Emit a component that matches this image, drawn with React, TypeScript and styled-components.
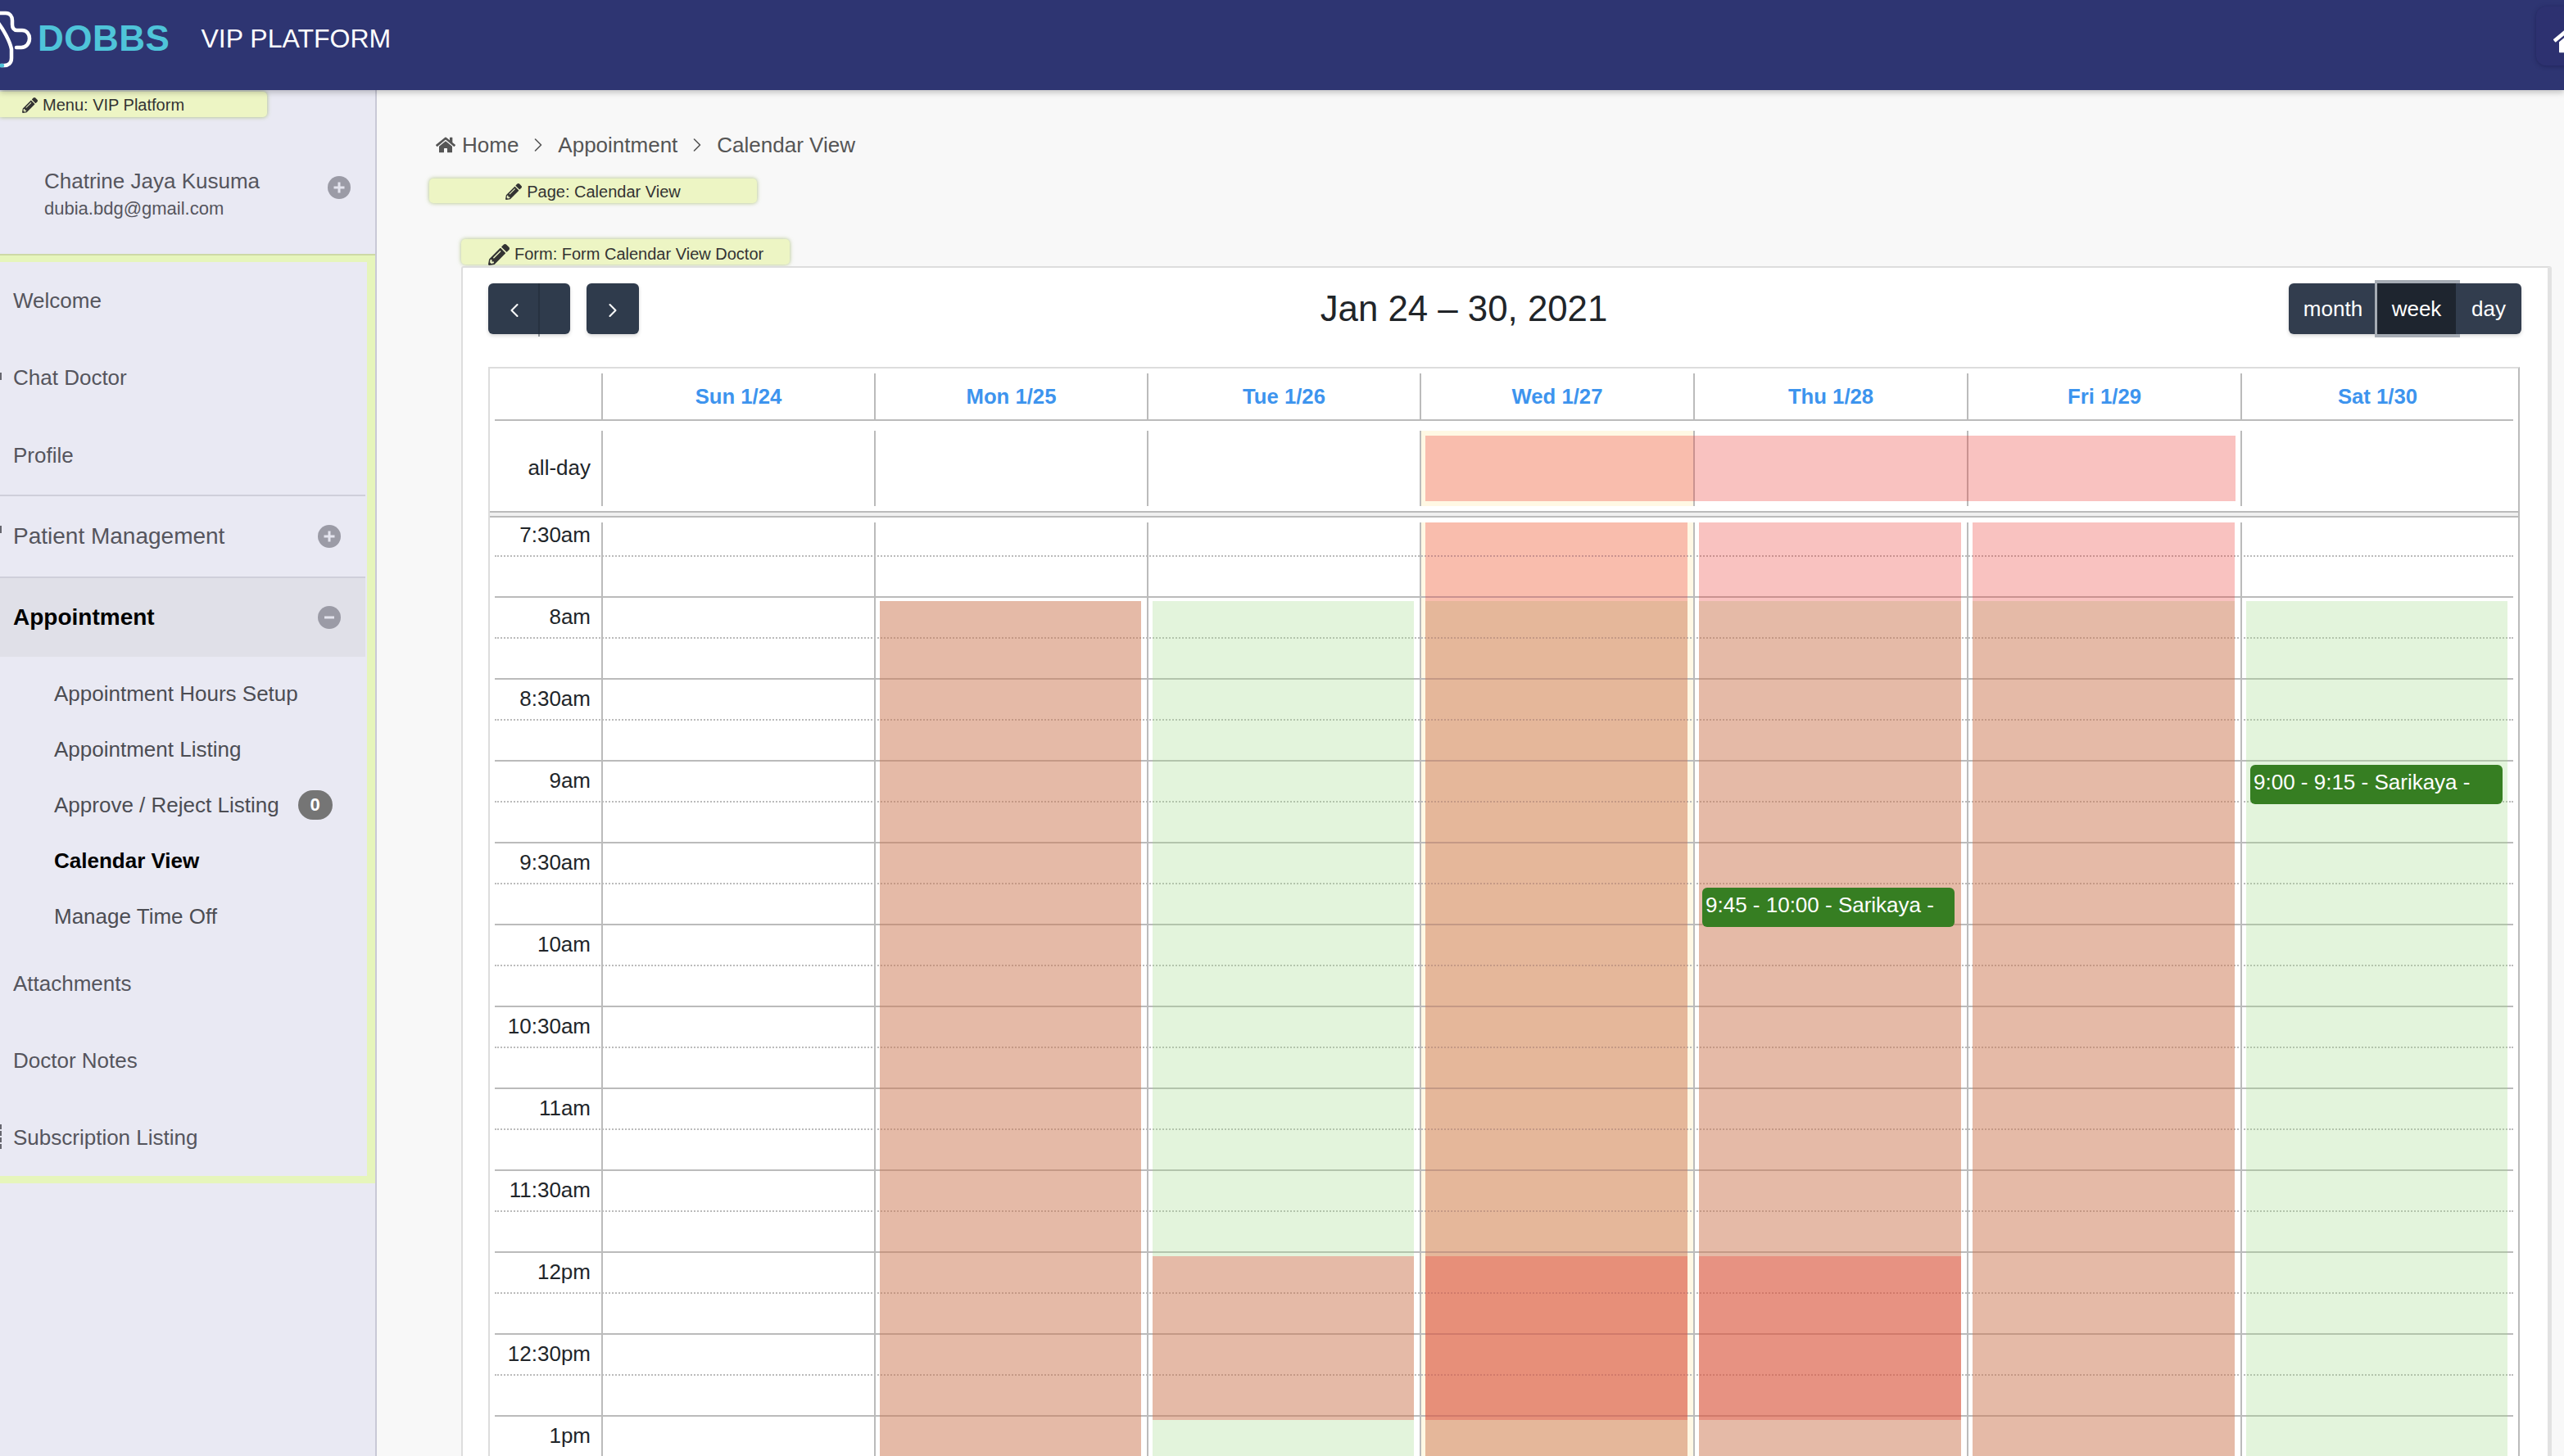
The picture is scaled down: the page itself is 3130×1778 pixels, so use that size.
import React from "react"
import styled, { createGlobalStyle } from "styled-components"
import { FaHome, FaPencilAlt } from "react-icons/fa"
import { ChevronLeft, ChevronRight } from "lucide-react"

const GlobalStyle = createGlobalStyle`
  html, body {
    margin: 0;
    padding: 0;
    height: 100%;
    overflow: hidden;
    background: #f8f8f8;
    font-family: "Liberation Sans", Arial, sans-serif;
  }
  * { box-sizing: border-box; }
`

const Page = styled.div`
  width: 3130px;
  height: 1778px;
  display: flex;
  flex-direction: column;
  overflow: hidden;
`

const Header = styled.header`
  position: relative;
  z-index: 5;
  flex: 0 0 110px;
  padding-bottom: 16px;
  display: flex;
  align-items: center;
  background: #2e3572;
  box-shadow: 0 3px 7px rgba(0, 0, 0, 0.22);
  overflow: hidden;
`

const LogoMark = styled.svg`
  flex: 0 0 40px;
  width: 40px;
  height: 94px;
`

const LogoText = styled.span`
  margin-left: 6px;
  font-size: 44px;
  font-weight: 700;
  letter-spacing: 0.5px;
  color: #4fc4d9;
`

const PlatformName = styled.span`
  margin-left: 38px;
  font-size: 32px;
  color: #fff;
`

const HomeButton = styled.div`
  margin-left: auto;
  margin-right: -36px;
  margin-bottom: 6px;
  padding-top: 8px;
  width: 70px;
  height: 72px;
  display: flex;
  align-items: center;
  padding-left: 21px;
  border-radius: 12px;
  background: #2d3170;
  box-shadow: 0 1px 5px rgba(20, 20, 70, 0.5);
  color: #fff;
`

const Body = styled.div`
  flex: 1;
  min-height: 0;
  display: flex;
`

const Sidebar = styled.aside`
  flex: 0 0 460px;
  background: #e9e9f3;
  border-right: 2px solid #c9c9d6;
`

const Tag = styled.div<{ $width: number; $inset?: number; $center?: boolean; $down?: number }>`
  width: ${p => p.$width}px;
  height: 31px;
  display: flex;
  align-items: center;
  justify-content: ${p => (p.$center ? "center" : "flex-start")};
  gap: 6px;
  padding-left: ${p => p.$inset ?? 0}px;
  padding-top: ${p => p.$down ?? 2}px;
  background: #edf5c4;
  border-radius: 5px;
  box-shadow: 0 0 5px rgba(150, 175, 90, 0.75);
  font-size: 20px;
  color: #333;
  white-space: nowrap;
`

const MenuTag = styled(Tag)`
  margin-top: 2px;
  border-radius: 0 5px 5px 0;
`

const UserBlock = styled.div`
  height: 167px;
  padding: 61px 30px 0 54px;
  display: flex;
  justify-content: space-between;
  color: #55555d;
`

const UserName = styled.div`
  font-size: 26px;
  line-height: 34px;
`

const UserMail = styled.div`
  font-size: 22px;
  line-height: 34px;
`

const MenuFrame = styled.div`
  padding: 10px 10px 9px 0;
  background: #e6f5bb;
  box-shadow: inset 0 2px 0 #cdd9a5;
`

const MenuList = styled.nav`
  background: #e9e9f3;
`

const MenuItem = styled.div<{ $height: number; $mark?: "chat" | "patient" | "list" }>`
  position: relative;
  height: ${p => p.$height}px;
  padding: 0 30px 0 16px;
  display: flex;
  align-items: center;
  justify-content: space-between;
  font-size: 26px;
  color: #55555d;
  &::before {
    content: ${p => (p.$mark ? '""' : "none")};
    position: absolute;
    left: 0;
    top: ${p => (p.$mark === "list" ? 31 : p.$mark === "patient" ? 36 : 41)}px;
    height: ${p => (p.$mark === "list" ? 30 : 9)}px;
    border-left: 2px ${p => (p.$mark === "list" ? "dashed" : "solid")} #66666e;
  }
`

const GroupItem = styled(MenuItem)<{ $open?: boolean }>`
  margin-right: 2px;
  padding-right: 30px;
  font-size: 28px;
  border-top: 2px solid #cfcfda;
  background: ${p => (p.$open ? "#e0e0e8" : "transparent")};
  color: ${p => (p.$open ? "#000" : "#55555d")};
  font-weight: ${p => (p.$open ? 700 : 400)};
`

const SubMenu = styled.div`
  padding: 11px 2px 1px 66px;
`

const SubItem = styled.div<{ $active?: boolean }>`
  height: 68px;
  display: flex;
  align-items: center;
  gap: 23px;
  font-size: 26px;
  color: ${p => (p.$active ? "#000" : "#4c4d53")};
  font-weight: ${p => (p.$active ? 700 : 400)};
`

const CountBadge = styled.span`
  width: 42px;
  height: 36px;
  border-radius: 18px;
  background: #757575;
  color: #fff;
  font-size: 22px;
  font-weight: 700;
  display: flex;
  align-items: center;
  justify-content: center;
`

const Main = styled.main`
  flex: 1;
  min-width: 0;
  padding: 50px 15px 0 64px;
  display: flex;
  flex-direction: column;
`

const Breadcrumb = styled.div`
  height: 34px;
  margin-left: 8px;
  display: flex;
  align-items: center;
  font-size: 26px;
  color: #555;
`

const CrumbText = styled.span`
  margin-left: 8px;
`

const CrumbSeparator = styled(ChevronRight)`
  margin: 0 10px;
`

const PageTag = styled(Tag)`
  margin-top: 24px;
  height: 30px;
`

const FormTag = styled(Tag)`
  margin: 44px 0 2px 39px;
`

const Panel = styled.section`
  flex: 1;
  min-height: 0;
  margin-left: 39px;
  padding: 19px 34px 0 31px;
  display: flex;
  flex-direction: column;
  background: #fff;
  border-top: 2px solid #ddd;
  border-left: 2px solid #ddd;
  border-right: 5px solid #e2e2e2;
  border-radius: 3px 3px 0 0;
`

const Toolbar = styled.div`
  flex: 0 0 62px;
  display: flex;
  align-items: center;
  justify-content: space-between;
`

const NavGroup = styled.div`
  display: flex;
  gap: 20px;
`

const NavButton = styled.div<{ $width: number; $split?: boolean }>`
  width: ${p => p.$width}px;
  height: 62px;
  display: flex;
  align-items: center;
  padding-top: 3px;
  justify-content: ${p => (p.$split ? "flex-start" : "center")};
  padding-left: ${p => (p.$split ? 18 : 0)}px;
  position: relative;
  background: #2f3b4c;
  border-radius: 6px;
  box-shadow: 0 2px 4px rgba(0, 0, 0, 0.16);
  color: #fff;
  &::after {
    content: ${p => (p.$split ? '""' : "none")};
    position: absolute;
    left: 61px;
    top: 0;
    bottom: -3px;
    width: 2px;
    background: rgba(30, 40, 52, 0.45);
  }
`

const Title = styled.h2`
  margin: 0;
  font-size: 43.8px;
  font-weight: 400;
  color: #212529;
`

const ViewSwitch = styled.div`
  display: flex;
  height: 62px;
  margin-right: -2px;
  border-radius: 6px;
  box-shadow: 0 2px 4px rgba(0, 0, 0, 0.16);
`

const ViewButton = styled.div<{ $width: number; $active?: boolean; $edge?: "left" | "right" }>`
  position: relative;
  z-index: ${p => (p.$active ? 1 : p.$edge === "right" ? 2 : 0)};
  width: ${p => p.$width}px;
  display: flex;
  align-items: center;
  justify-content: center;
  font-size: 26px;
  color: #fff;
  background: ${p => (p.$active ? "#1e252f" : "#323d4e")};
  border-radius: ${p => (p.$edge === "left" ? "6px 0 0 6px" : p.$edge === "right" ? "0 6px 6px 0" : "0")};
  box-shadow: ${p => (p.$active ? "1px 0 0 4px #a6acb4" : "none")};
`

const Calendar = styled.div`
  flex: 1;
  min-height: 0;
  margin-top: 40px;
  display: flex;
  flex-direction: column;
  border-top: 2px solid #ddd;
  border-left: 2px solid #ddd;
  border-right: 2px solid #bbb;
`

// day columns are not quite equal in the original table
const columns = "130px 333px 333px 333px 334px 334px 334px 1fr"

const HeadRow = styled.div`
  margin: 0 6px;
  padding-top: 6px;
  height: 64px;
  display: grid;
  grid-template-columns: ${columns};
  border-bottom: 2px solid #bbb;
`

const HeadCell = styled.div`
  display: flex;
  align-items: center;
  justify-content: center;
  border-left: 2px solid #bbb;
  font-size: 25.7px;
  font-weight: 700;
  color: #3d94ee;
`

const AllDayRow = styled.div`
  margin: 0 6px;
  padding: 12px 0 6px;
  height: 110px;
  display: grid;
  grid-template-columns: ${columns};
  grid-template-rows: 92px;
`

const AxisLabel = styled.div`
  padding-right: 13px;
  text-align: right;
  font-size: 26px;
  color: #212529;
`

const AllDayLabel = styled(AxisLabel)`
  grid-row: 1;
  grid-column: 1;
  line-height: 90px;
`

const AllDayCell = styled.div<{ $col: number; $today?: boolean }>`
  grid-row: 1;
  grid-column: ${p => p.$col};
  border-left: 2px solid #bbb;
  background: ${p => (p.$today ? "#fff8e4" : "transparent")};
`

const AllDayBar = styled.div`
  grid-row: 1;
  grid-column: 5 / 8;
  margin: 6px 6px 6px 7px;
  background: rgba(235, 52, 45, 0.3);
`

const Divider = styled.div`
  flex: 0 0 8px;
  background: #f0f0f0;
  border-top: 2px solid #bbb;
  border-bottom: 2px solid #bbb;
`

const TimeGrid = styled.div`
  flex: 1;
  min-height: 0;
  margin: 6px 6px 0;
  position: relative;
  overflow: hidden;
`

const ColumnLayer = styled.div<{ $z: number }>`
  position: absolute;
  inset: 0;
  z-index: ${p => p.$z};
  display: grid;
  grid-template-columns: ${columns};
`

const BackColumn = styled.div<{ $today?: boolean }>`
  border-left: 2px solid #bbb;
  background: ${p => (p.$today ? "#fff8e4" : "transparent")};
`

const OverlayColumn = styled.div`
  position: relative;
  border-left: 2px solid transparent;
`

const Slots = styled.div`
  position: relative;
  z-index: 1;
`

const SlotRow = styled.div<{ $kind: "first" | "major" | "minor" }>`
  display: flow-root;
  height: ${p => (p.$kind === "first" ? 40 : 50)}px;
  border-top: ${p => (p.$kind === "major" ? "2px solid #bbb" : p.$kind === "minor" ? "2px dotted #bbb" : "none")};
`

const SlotLabel = styled(AxisLabel)<{ $first?: boolean }>`
  width: 130px;
  line-height: 46px;
  margin-top: ${p => (p.$first ? -8 : 0)}px;
`

const Shade = styled.div<{ $kind: "red" | "green"; $top: number; $height?: number }>`
  position: absolute;
  left: 5px;
  right: 7px;
  top: ${p => p.$top}px;
  ${p => (p.$height ? `height: ${p.$height}px;` : "bottom: 0;")}
  background: ${p => (p.$kind === "red" ? "rgba(235, 52, 45, 0.3)" : "rgba(162, 218, 138, 0.3)")};
`

const Appointment = styled.div<{ $top: number; $left: number }>`
  position: absolute;
  z-index: 1;
  top: ${p => p.$top}px;
  left: ${p => p.$left}px;
  width: 308px;
  height: 48px;
  padding-left: 4px;
  border-radius: 6px;
  background: #367e22;
  color: #fff;
  font-size: 26px;
  line-height: 43px;
  white-space: nowrap;
`

const ToggleDot = styled.svg`
  flex: 0 0 28px;
  width: 28px;
  height: 28px;
`

const UserToggle = styled(ToggleDot)`
  margin-top: 11px;
`

const Toggle: React.FC<{ open?: boolean }> = ({ open }) => (
  <ToggleDot viewBox="0 0 28 28">
    <circle cx="14" cy="14" r="14" fill="#9b9ba6" />
    <path d={open ? "M8 14h12" : "M14 7.5v13M7.5 14h13"} stroke="#e4e4ee" strokeWidth="3" />
  </ToggleDot>
)

const Logo = () => (
  <LogoMark viewBox="0 0 40 94" fill="none" strokeWidth="4.5" strokeLinecap="round">
    <path
      stroke="#fff"
      d="M-2 16H7C12 16 15 20 15 25V30C15 34 17 37 21 37H27C33 37 36 42 36 47C36 53 32 58 26 58H20"
    />
    <path stroke="#fff" d="M-2 28C4 36 12 50 14 60V71C14 77 10 80 5 80H2" />
    <path stroke="#4fc4d9" d="M-2 80H3" />
  </LogoMark>
)

const days = ["Sun 1/24", "Mon 1/25", "Tue 1/26", "Wed 1/27", "Thu 1/28", "Fri 1/29", "Sat 1/30"]
const hourLabels = ["7:30am", "8am", "8:30am", "9am", "9:30am", "10am", "10:30am", "11am", "11:30am", "12pm", "12:30pm", "1pm"]

// offsets are px from the top of the time grid, 100px per half hour
const shades: { kind: "red" | "green"; top: number; height?: number }[][] = [
  [],
  [{ kind: "green", top: 96 }, { kind: "red", top: 96 }],
  [{ kind: "green", top: 96 }, { kind: "red", top: 896, height: 200 }],
  [{ kind: "green", top: 96 }, { kind: "red", top: 0 }, { kind: "red", top: 896, height: 200 }],
  [{ kind: "green", top: 96 }, { kind: "red", top: 0 }, { kind: "red", top: 896, height: 200 }],
  [{ kind: "green", top: 96 }, { kind: "red", top: 0 }],
  [{ kind: "green", top: 96 }],
]

const bookings: Record<number, { text: string; top: number; left: number }> = {
  4: { text: "9:45 - 10:00 - Sarikaya -", top: 446, left: 9 },
  6: { text: "9:00 - 9:15 - Sarikaya -", top: 296, left: 10 },
}

const App: React.FC = () => (
  <Page>
    <GlobalStyle />
    <Header>
      <Logo />
      <LogoText>DOBBS</LogoText>
      <PlatformName>VIP PLATFORM</PlatformName>
      <HomeButton>
        <FaHome size={42} />
      </HomeButton>
    </Header>
    <Body>
      <Sidebar>
        <MenuTag $width={326} $inset={27}>
          <FaPencilAlt size={19} />
          Menu: VIP Platform
        </MenuTag>
        <UserBlock>
          <div>
            <UserName>Chatrine Jaya Kusuma</UserName>
            <UserMail>dubia.bdg@gmail.com</UserMail>
          </div>
          <UserToggle viewBox="0 0 28 28">
            <circle cx="14" cy="14" r="14" fill="#9b9ba6" />
            <path d="M14 7.5v13M7.5 14h13" stroke="#e4e4ee" strokeWidth="3" />
          </UserToggle>
        </UserBlock>
        <MenuFrame>
          <MenuList>
            <MenuItem $height={94}>Welcome</MenuItem>
            <MenuItem $height={94} $mark="chat">Chat Doctor</MenuItem>
            <MenuItem $height={96}>Profile</MenuItem>
            <GroupItem $height={100} $mark="patient">
              Patient Management
              <Toggle />
            </GroupItem>
            <GroupItem $height={98} $open>
              Appointment
              <Toggle open />
            </GroupItem>
            <SubMenu>
              <SubItem>Appointment Hours Setup</SubItem>
              <SubItem>Appointment Listing</SubItem>
              <SubItem>
                Approve / Reject Listing
                <CountBadge>0</CountBadge>
              </SubItem>
              <SubItem $active>Calendar View</SubItem>
              <SubItem>Manage Time Off</SubItem>
            </SubMenu>
            <MenuItem $height={94}>Attachments</MenuItem>
            <MenuItem $height={94}>Doctor Notes</MenuItem>
            <MenuItem $height={94} $mark="list">Subscription Listing</MenuItem>
          </MenuList>
        </MenuFrame>
      </Sidebar>
      <Main>
        <Breadcrumb>
          <FaHome size={24} />
          <CrumbText>Home</CrumbText>
          <CrumbSeparator size={28} strokeWidth={1.4} />
          Appointment
          <CrumbSeparator size={28} strokeWidth={1.4} />
          Calendar View
        </Breadcrumb>
        <PageTag $width={400} $center>
          <FaPencilAlt size={20} />
          Page: Calendar View
        </PageTag>
        <FormTag $width={401} $inset={33} $down={6}>
          <FaPencilAlt size={26} />
          Form: Form Calendar View Doctor
        </FormTag>
        <Panel>
          <Toolbar>
            <NavGroup>
              <NavButton $width={100} $split>
                <ChevronLeft size={28} strokeWidth={1.8} />
              </NavButton>
              <NavButton $width={64}>
                <ChevronRight size={28} strokeWidth={1.8} />
              </NavButton>
            </NavGroup>
            <Title>Jan 24 – 30, 2021</Title>
            <ViewSwitch>
              <ViewButton $width={108} $edge="left">month</ViewButton>
              <ViewButton $width={96} $active>week</ViewButton>
              <ViewButton $width={80} $edge="right">day</ViewButton>
            </ViewSwitch>
          </Toolbar>
          <Calendar>
            <HeadRow>
              <span />
              {days.map(day => (
                <HeadCell key={day}>{day}</HeadCell>
              ))}
            </HeadRow>
            <AllDayRow>
              <AllDayLabel>all-day</AllDayLabel>
              {days.map((day, i) => (
                <AllDayCell key={day} $col={i + 2} $today={i === 3} />
              ))}
              <AllDayBar />
            </AllDayRow>
            <Divider />
            <TimeGrid>
              <ColumnLayer $z={0}>
                <span />
                {days.map((day, i) => (
                  <BackColumn key={day} $today={i === 3} />
                ))}
              </ColumnLayer>
              <Slots>
                {hourLabels.map((label, i) => (
                  <React.Fragment key={label}>
                    <SlotRow $kind={i === 0 ? "first" : "major"}>
                      <SlotLabel $first={i === 0}>{label}</SlotLabel>
                    </SlotRow>
                    <SlotRow $kind="minor" />
                  </React.Fragment>
                ))}
              </Slots>
              <ColumnLayer $z={2}>
                <span />
                {days.map((day, i) => (
                  <OverlayColumn key={day}>
                    {shades[i].map((s, j) => (
                      <Shade key={j} $kind={s.kind} $top={s.top} $height={s.height} />
                    ))}
                    {bookings[i] && (
                      <Appointment $top={bookings[i].top} $left={bookings[i].left}>
                        {bookings[i].text}
                      </Appointment>
                    )}
                  </OverlayColumn>
                ))}
              </ColumnLayer>
            </TimeGrid>
          </Calendar>
        </Panel>
      </Main>
    </Body>
  </Page>
)

export default App
